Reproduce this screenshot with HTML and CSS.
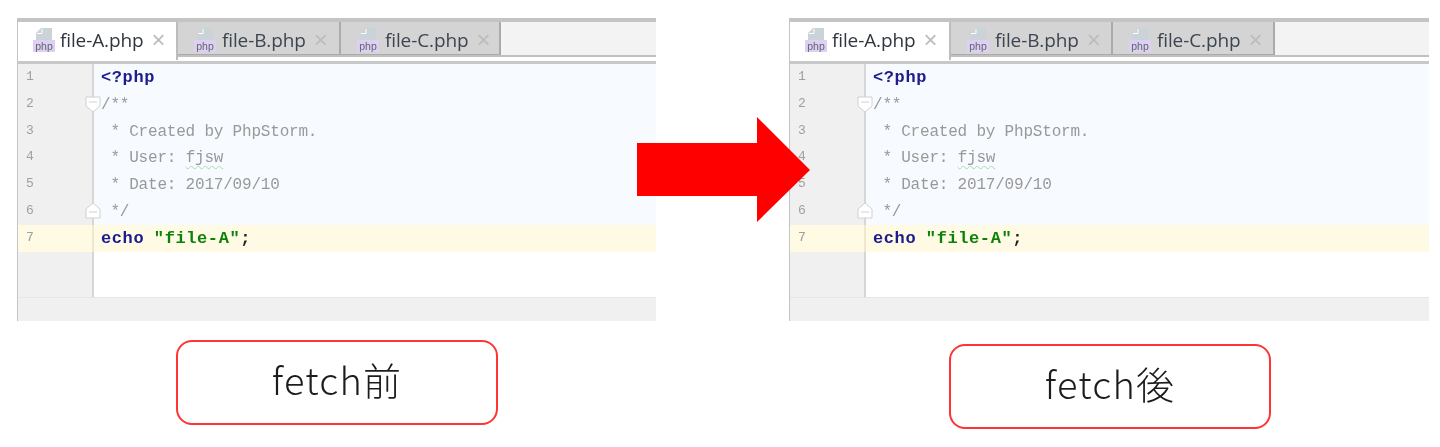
FILE: index.html
```html
<!DOCTYPE html>
<html lang="ja">
<head>
<meta charset="utf-8">
<title>fetch</title>
<link rel="stylesheet" href="styles.css">
</head>
<body>
<main class="figure">
  <section class="col col-before">
    <div class="panel">
      <div class="tabs">
        <div class="tab active"><svg class="ficon" viewBox="0 0 22 26"><path class="pg" d="M8 1h11v12H3V6z"/><path class="fold" d="M4 6.500h5V2"/><rect class="lbl" x="0" y="13" width="22" height="12"/><text x="11" y="22.500" class="lbltx">php</text></svg><span class="name">file-A.php</span><span class="x">×</span></div>
        <div class="tab"><svg class="ficon" viewBox="0 0 22 26"><path class="pg" d="M8 1h11v12H3V6z"/><path class="fold" d="M4 6.500h5V2"/><rect class="lbl" x="0" y="13" width="22" height="12"/><text x="11" y="22.500" class="lbltx">php</text></svg><span class="name">file-B.php</span><span class="x">×</span></div>
        <div class="tab"><svg class="ficon" viewBox="0 0 22 26"><path class="pg" d="M8 1h11v12H3V6z"/><path class="fold" d="M4 6.500h5V2"/><rect class="lbl" x="0" y="13" width="22" height="12"/><text x="11" y="22.500" class="lbltx">php</text></svg><span class="name">file-C.php</span><span class="x">×</span></div>
        <div class="tab-rest"></div>
      </div>
      <div class="rule"></div>
      <div class="editor">
        <div class="ln first"><span class="num">1</span><span class="code kw">&lt;?php</span></div>
        <div class="ln"><span class="num">2</span><span class="code cm">/**</span><svg class="foldmark" viewBox="0 0 16 17"><path d="M1 1h14v9l-7 6-7-6z"/><path d="M4 6h8"/></svg></div>
        <div class="ln"><span class="num">3</span><span class="code cm"> * Created by PhpStorm.</span></div>
        <div class="ln"><span class="num">4</span><span class="code cm"> * User: <span class="sq">fjsw</span></span></div>
        <div class="ln"><span class="num">5</span><span class="code cm"> * Date: 2017/09/10</span></div>
        <div class="ln"><span class="num">6</span><span class="code cm"> */</span><svg class="foldmark up" viewBox="0 0 16 17"><path d="M1 16h14V7L8 1 1 7z"/><path d="M4 10h8"/></svg></div>
        <div class="ln cur"><span class="num">7</span><span class="code"><span class="kw">echo</span> <span class="str">"file-A"</span><span class="semi">;</span></span></div>
        <div class="empty"><span class="gut"></span></div>
      </div>
      <div class="status"></div>
    </div>
    <div class="caption">fetch前</div>
  </section>

  <section class="col col-after">
    <div class="panel">
      <div class="tabs">
        <div class="tab active"><svg class="ficon" viewBox="0 0 22 26"><path class="pg" d="M8 1h11v12H3V6z"/><path class="fold" d="M4 6.500h5V2"/><rect class="lbl" x="0" y="13" width="22" height="12"/><text x="11" y="22.500" class="lbltx">php</text></svg><span class="name">file-A.php</span><span class="x">×</span></div>
        <div class="tab"><svg class="ficon" viewBox="0 0 22 26"><path class="pg" d="M8 1h11v12H3V6z"/><path class="fold" d="M4 6.500h5V2"/><rect class="lbl" x="0" y="13" width="22" height="12"/><text x="11" y="22.500" class="lbltx">php</text></svg><span class="name">file-B.php</span><span class="x">×</span></div>
        <div class="tab"><svg class="ficon" viewBox="0 0 22 26"><path class="pg" d="M8 1h11v12H3V6z"/><path class="fold" d="M4 6.500h5V2"/><rect class="lbl" x="0" y="13" width="22" height="12"/><text x="11" y="22.500" class="lbltx">php</text></svg><span class="name">file-C.php</span><span class="x">×</span></div>
        <div class="tab-rest"></div>
      </div>
      <div class="rule"></div>
      <div class="editor">
        <div class="ln first"><span class="num">1</span><span class="code kw">&lt;?php</span></div>
        <div class="ln"><span class="num">2</span><span class="code cm">/**</span><svg class="foldmark" viewBox="0 0 16 17"><path d="M1 1h14v9l-7 6-7-6z"/><path d="M4 6h8"/></svg></div>
        <div class="ln"><span class="num">3</span><span class="code cm"> * Created by PhpStorm.</span></div>
        <div class="ln"><span class="num">4</span><span class="code cm"> * User: <span class="sq">fjsw</span></span></div>
        <div class="ln"><span class="num">5</span><span class="code cm"> * Date: 2017/09/10</span></div>
        <div class="ln"><span class="num">6</span><span class="code cm"> */</span><svg class="foldmark up" viewBox="0 0 16 17"><path d="M1 16h14V7L8 1 1 7z"/><path d="M4 10h8"/></svg></div>
        <div class="ln cur"><span class="num">7</span><span class="code"><span class="kw">echo</span> <span class="str">"file-A"</span><span class="semi">;</span></span></div>
        <div class="empty"><span class="gut"></span></div>
      </div>
      <div class="status"></div>
    </div>
    <div class="caption">fetch後</div>
  </section>

  <svg class="arrow" viewBox="0 0 174 105"><path d="M0 26h120V0l53 53-53 52V79H0z"/></svg>
</main>
</body>
</html>
```
FILE: styles.css
```css
* { box-sizing: border-box; }
html, body { margin: 0; background: #fff; }
body { width: 1440px; height: 447px; overflow: hidden; }

.figure {
  position: relative;
  display: flex;
  padding: 18px 0 0 17px;
  gap: 133px;
  font-family: "Open Sans", "Noto Sans", sans-serif;
}
.col { width: 639px; display: flex; flex-direction: column; }
.col-after { width: 640px; }

.panel {
  height: 303px;
  display: flex;
  flex-direction: column;
  filter: blur(0.6px);
  border-left: 1px solid #c4c4c4;
}

.tabs {
  display: flex;
  height: 39px;
  border-top: 4px solid #c4c4c4;
  border-bottom: 2px solid #c0c0c0;
  background: #f3f3f3;
}
.tab {
  width: 163px;
  display: flex;
  align-items: center;
  padding: 3px 0 0 16px;
  background: #d4d4d4;
  border-right: 2px solid #ababab;
  border-bottom: 1px solid #ababab;
  color: #3d4650;
}
.tab:nth-child(3) { width: 160px; }
.col-after .tab { width: 162px; }
.tab.active {
  width: 160px;
  padding: 0 0 2px 15px;
  background: #fff;
  border-right-color: #bdbdbd;
  border-bottom: 0;
  margin-bottom: -5px;
  position: relative;
  z-index: 1;
  color: #2f3640;
}
.col-after .tab.active { width: 161px; }
.tab-rest { flex: 1; }
.ficon { width: 22px; height: 26px; margin-right: 6px; flex: none; }
.active .ficon { margin-right: 5px; }
.pg { fill: #c9d3d8; }
.fold { fill: none; stroke: #fff; stroke-width: 1; }
.lbl { fill: #ddd0f4; }
.lbltx {
  font-family: "Liberation Sans", sans-serif;
  font-size: 10.5px;
  fill: #62666e;
  text-anchor: middle;
}
.name { font-size: 19px; letter-spacing: -0.12px; white-space: nowrap; }
.x { margin-left: 8px; font-size: 24px; line-height: 1; color: #bcbcbc; font-family: "Liberation Sans", sans-serif; }

.rule {
  height: 7px;
  background: #fff;
  border-bottom: 3px solid #c8c8c8;
}

.editor {
  flex: 1;
  display: flex;
  flex-direction: column;
  font-family: "Liberation Mono", monospace;
  background: #fff;
}
.ln {
  position: relative;
  display: flex;
  height: 26.8px;
  line-height: 26.8px;
  background: linear-gradient(to right, #fff 8px, #f7faff 8px);
}
.ln.first { background: #f7faff; }
.ln.cur { background: #fffae3; }
.num {
  flex: none;
  width: 76px;
  margin-right: 7px;
  padding-left: 8px;
  font-size: 13px;
  color: #a0a0a0;
  background: #f0f0f0;
  border-right: 2px solid #d6d6d6;
}
.cur .num { background: #fffae3; border-right-color: #eee8cc; }
.code { white-space: pre; font-size: 16px; padding-top: 1px; }
.cm { color: #999; letter-spacing: -0.2px; }
.kw { color: #1c1c8c; font-weight: 700; font-size: 17px; letter-spacing: 0.6px; }
.str { color: #0a820a; font-weight: 700; font-size: 17px; letter-spacing: 0.6px; }
.semi { color: #222; font-weight: 700; font-size: 17px; }
.sq { text-decoration: underline wavy #a6dca6 1px; text-underline-offset: 3px; }
.foldmark {
  position: absolute;
  left: 67px;
  top: 5px;
  width: 16px;
  height: 17px;
  fill: #fff;
  stroke: #d0d0d0;
  stroke-width: 1;
}
.foldmark.up { top: 4px; }
.empty { flex: 1; display: flex; }
.gut { width: 76px; background: #f0f0f0; border-right: 2px solid #d6d6d6; }

.status {
  height: 24px;
  background: #f0f0f0;
  border-top: 1px solid #e6e6e6;
}

.caption {
  width: 322px;
  height: 85px;
  margin: 19px 0 0 159px;
  padding-bottom: 8px;
  display: flex;
  align-items: center;
  justify-content: center;
  border: 2px solid #ff3434;
  border-radius: 16px;
  font-family: "Noto Sans CJK JP", sans-serif;
  font-weight: 300;
  font-size: 38px;
  letter-spacing: 1.2px;
  color: #1c1c1c;
  background: #fff;
  filter: blur(0.3px);
}
.col-after .caption { margin: 23px 0 0 160px; }

.arrow {
  position: absolute;
  left: 637px;
  top: 117px;
  width: 174px;
  height: 105px;
  fill: #ff0000;
}
```
